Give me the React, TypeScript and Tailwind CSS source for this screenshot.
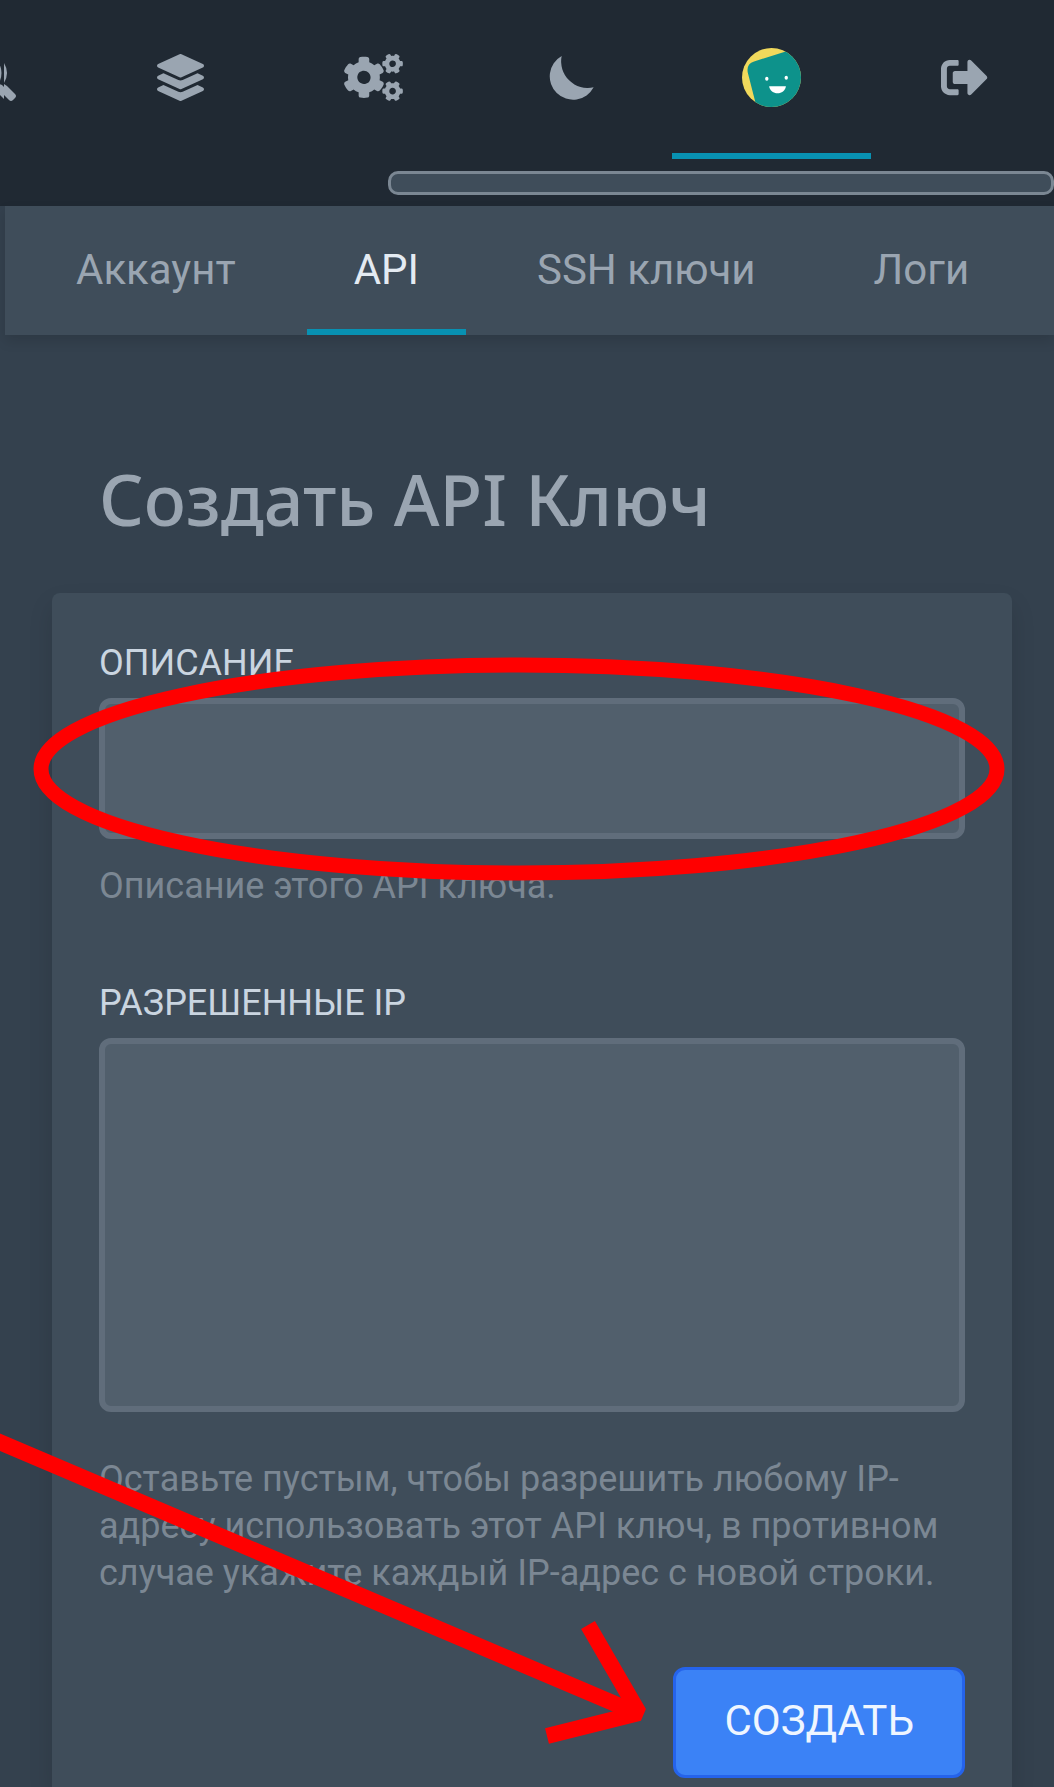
import type { ReactNode } from "react";
import { FaCogs, FaLayerGroup, FaSignOutAlt } from "react-icons/fa";

/* Magnifier whose right edge shows at the side of the scrolled menu, split by a thin seam */
function SplitMagnifier() {
  return (
    <svg viewBox="-29 54 47 47" className="size-[47px]" fill="currentColor" aria-hidden="true">
      <path d="M0 63Q5 73 0 83Z" />
      <path d="M5 63Q11 73 5 83Z" />
      <path d="M0 84L3 85L5 87V99L0 94Z" />
      <path d="M5 84L8 86L16 94Q18 96 16 98L14 100Q12 102 10 100L5 95Z" />
    </svg>
  );
}

function Crescent() {
  return (
    <svg viewBox="672 72 177 141" className="h-[47px] w-[59px]" fill="currentColor" aria-hidden="true">
      <path d="M728 78A70 70 0 1 0 824 172A80 80 0 0 1 728 78Z" />
    </svg>
  );
}

function Avatar() {
  return (
    <svg viewBox="248 54 176 176" className="h-[59px] w-[59px]" aria-hidden="true">
      <defs>
        <clipPath id="avatar-circle">
          <circle cx="336" cy="142" r="88" />
        </clipPath>
      </defs>
      <g clipPath="url(#avatar-circle)">
        <rect x="248" y="54" width="176" height="176" fill="#f0d95c" />
        <path d="M294 240L265 126Q261 101 284 94L376 65L440 45V240Z" fill="#0d928b" />
        <ellipse cx="322" cy="146" rx="5" ry="6" fill="#fff" />
        <ellipse cx="380" cy="143" rx="5" ry="6" fill="#fff" />
        <path d="M329 168H379C377 182 366 189 354 189S331 182 329 168Z" fill="#fff" />
      </g>
    </svg>
  );
}

function IconLink({ label, active, children }: { label: string; active?: boolean; children: ReactNode }) {
  return (
    <a
      href="#"
      aria-label={label}
      className={
        active
          ? "flex shrink-0 items-center border-b-6 border-[#0891b2] px-[70px] pt-0.5"
          : "flex shrink-0 items-center border-b-6 border-transparent px-[70px] pt-0.5"
      }
    >
      {children}
    </a>
  );
}

const tabs = [
  { label: "Аккаунт", active: false },
  { label: "API", active: true },
  { label: "SSH ключи", active: false },
  { label: "Логи", active: false },
];

/* Red ellipse round the description field and the arrow that leads to the submit button */
function Annotations() {
  return (
    <svg
      viewBox="0 0 1054 1787"
      className="pointer-events-none absolute top-0 left-0 h-[1787px] w-[1054px]"
      fill="none"
      stroke="#ff0000"
      strokeWidth="15"
      aria-hidden="true"
    >
      <ellipse cx="519" cy="769" rx="478" ry="104" />
      <path d="M-10 1438L639 1714" strokeWidth="16" />
      <path d="M588 1625L639 1713L547 1736" strokeWidth="16" strokeLinejoin="bevel" />
    </svg>
  );
}

export default function App() {
  return (
    <div className="relative flex min-h-screen flex-col overflow-hidden bg-[#34414e] font-[Roboto,sans-serif] text-[#9aa5b1]">
      <header className="bg-[#202933] pb-[11px]">
        <nav aria-label="Главное меню" className="-ml-[100px] flex h-[159px]">
          <IconLink label="Поиск">
            <SplitMagnifier />
          </IconLink>
          <IconLink label="Серверы">
            <FaLayerGroup className="size-[47px]" />
          </IconLink>
          <IconLink label="Настройки">
            <FaCogs className="h-[47px] w-[59px]" />
          </IconLink>
          <IconLink label="Тёмная тема">
            <Crescent />
          </IconLink>
          <IconLink label="Профиль" active>
            <Avatar />
          </IconLink>
          <IconLink label="Выйти">
            <FaSignOutAlt className="size-[47px]" />
          </IconLink>
        </nav>
        <div className="mt-3 ml-[388px] h-6 rounded-[10px] border-3 border-[#7b8793] bg-[#3f4d5a]" />
      </header>

      <nav
        aria-label="Профиль"
        className="ml-[5px] flex h-[129px] gap-6 bg-[#3f4d5a] pl-6 text-[42px] leading-[47px] shadow-[0_6px_12px_rgba(0,0,0,0.12)]"
      >
        {tabs.map((tab) => (
          <a
            key={tab.label}
            href="#"
            aria-current={tab.active ? "page" : undefined}
            className={
              tab.active
                ? "flex shrink-0 items-center border-b-6 border-[#0891b2] px-[47px] pt-1 whitespace-nowrap text-[#e4ebf2]"
                : "flex shrink-0 items-center border-b-6 border-transparent px-[47px] pt-1 whitespace-nowrap"
            }
          >
            {tab.label}
          </a>
        ))}
      </nav>

      <main className="mr-[42px] ml-[52px] flex flex-1 flex-col pt-[117px]">
        <h1 className="mb-[46px] px-[47px] font-['Noto_Sans',sans-serif] text-[70px] leading-[95px] font-medium">
          Создать API Ключ
        </h1>
        <form
          className="flex flex-1 flex-col rounded-t-lg bg-[#3f4d5a] px-[47px] pt-[47px] pb-[9px] text-[36px] leading-[47px] shadow-[0_12px_24px_rgba(0,0,0,0.12)]"
          onSubmit={(event) => event.preventDefault()}
        >
          <label htmlFor="description" className="mb-[11px] text-[#cad5e0]">
            ОПИСАНИЕ
          </label>
          <input
            id="description"
            type="text"
            aria-describedby="description-help"
            className="h-[141px] rounded-xl border-6 border-[#606d7b] bg-[#515f6c] px-9 text-[#e4ebf2] outline-none"
          />
          <p id="description-help" className="mt-6 text-[#7b8793]">
            Описание этого API ключа.
          </p>

          <label htmlFor="allowed-ips" className="mt-[70px] mb-[11px] text-[#cad5e0]">
            РАЗРЕШЕННЫЕ IP
          </label>
          <textarea
            id="allowed-ips"
            aria-describedby="allowed-ips-help"
            className="h-[374px] resize-none rounded-xl border-6 border-[#606d7b] bg-[#515f6c] px-9 py-6 text-[#e4ebf2] outline-none"
          />
          <p id="allowed-ips-help" className="mt-11 text-[#7b8793]">
            Оставьте пустым, чтобы разрешить любому IP-адресу использовать этот API ключ, в противном случае укажите
            каждый IP-адрес с новой строки.
          </p>

          <button
            type="submit"
            className="mt-[70px] h-[111px] self-end rounded-xl border-3 border-[#2563eb] bg-[#3b82f6] px-12 pb-1 text-[42px] text-[#eff6ff]"
          >
            СОЗДАТЬ
          </button>
        </form>
      </main>

      <Annotations />
    </div>
  );
}
